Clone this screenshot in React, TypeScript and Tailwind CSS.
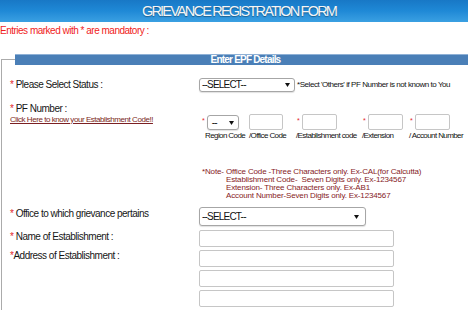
import React from "react";

const Star = ({ className = "" }: { className?: string }) => (
  <span className={`text-[#e3262b] ${className}`}>*</span>
);

const Arrow = () => (
  <svg width="5" height="4" viewBox="0 0 5 4" className="shrink-0">
    <polygon points="0,0 5,0 2.5,4" fill="#111" />
  </svg>
);

function FakeSelect({ className, text }: { className: string; text: string }) {
  return (
    <div
      className={`flex items-center justify-between rounded-[3px] border border-[#a6a6a6] bg-white pl-[2px] pr-[4px] shadow-[0_1px_1px_rgba(0,0,0,0.12)] ${className}`}
    >
      <span className="text-[10px] leading-none tracking-[-0.8px] text-[#111]">{text}</span>
      <Arrow />
    </div>
  );
}

const Box = ({ className }: { className: string }) => (
  <div className={`rounded-[2px] border border-[#c6c6c6] bg-white ${className}`} />
);

const pfCols = [
  { star: true, label: "Region Code", col: "w-[48px] pl-[3px]", input: "select", lab: "pl-[3px]" },
  { star: false, label: "/Office Code", col: "w-[47px] pl-[2px]", input: "w-[34px]", lab: "" },
  { star: true, label: "/Establishment code", col: "w-[67px] pl-[3px]", input: "w-[35px]", lab: "-ml-[1px]" },
  { star: true, label: "/Extension", col: "w-[47px] pl-[2px]", input: "w-[35px]", lab: "-ml-[1px]" },
  { star: true, label: "/ Account Number", col: "w-[60px] pl-[2px]", input: "w-[35px]", lab: "-ml-[1px]" },
];

const notes = [
  "Office Code -Three Characters only. Ex-CAL(for Calcutta)",
  "Establishment Code-  Seven Digits only. Ex-1234567",
  "Extension- Three Characters only. Ex-AB1",
  "Account Number-Seven Digits only. Ex-1234567",
];

export default function App() {
  return (
    <div className="h-[310px] w-[468px] overflow-hidden bg-white font-['Liberation_Sans',Arial,sans-serif] text-[#161616]">
      {/* title band */}
      <div className="flex h-[22px] items-center justify-center bg-gradient-to-b from-[#1878c6] via-[#1f89d6] to-[#3aa0e2] pl-[10px]">
        <h1 className="text-[14.5px] leading-none tracking-[-1.8px] text-[#f5f5f5] [text-shadow:0_1px_1px_rgba(0,0,0,0.35)]">
          GRIEVANCE REGISTRATION FORM
        </h1>
      </div>

      <p className="mt-[3px] text-[10px] leading-[12px] tracking-[-0.5px] text-[#f01c1c]">
        Entries marked with * are mandatory :
      </p>

      {/* fieldset */}
      <div className="ml-[1px] mt-[22px] h-[300px] border-l border-t border-[#ababab]">
        <div className="-mt-[6px] ml-[13px] flex h-[11px] items-center justify-center border-t border-[#8fb1d6] bg-[#4a7fb7] pl-[8px]">
          <span className="text-[10px] font-bold leading-none tracking-[-0.8px] text-white">Enter EPF Details</span>
        </div>

        <div className="pl-[8px]">
          {/* status */}
          <div className="mt-[13px] flex h-[14px] items-start">
            <div className="w-[189px] text-[10px] leading-[13px] tracking-[-0.5px]">
              <Star /> Please Select Status :
            </div>
            <FakeSelect className="h-[14px] w-[96px]" text="--SELECT--" />
            <span className="ml-[2px] self-center text-[8px] leading-none tracking-[-0.45px] text-[#111]">
              *Select 'Others' if PF Number is not known to You
            </span>
          </div>

          {/* pf number */}
          <div className="mt-[11px] flex items-start">
            <div className="w-[189px]">
              <div className="text-[10px] leading-[12px] tracking-[-0.5px]">
                <Star /> PF Number :
              </div>
              <a href="#" className="block text-[8px] leading-[10px] tracking-[-0.45px] text-[#7b1f22] underline">
                Click Here to know your Establishment Code!!
              </a>
            </div>
            <div className="pt-[12px]">
              <div className="flex">
                {pfCols.map((c) => (
                  <div key={c.label} className={`flex flex-col ${c.col}`}>
                    <div className="flex h-[15px] items-start">
                      {c.star && <Star className="mr-[1px] mt-[2px] text-[7px] leading-none" />}
                      {c.input === "select" ? (
                        <FakeSelect className="ml-[1px] h-[15px] w-[32px] pl-[4px]" text="--" />
                      ) : (
                        <Box className={`h-[16px] -mt-[1px] ${c.input} ${c.star ? "ml-[1px]" : ""}`} />
                      )}
                    </div>
                    <span
                      className={`mt-[1px] whitespace-nowrap text-[8px] leading-[9px] tracking-[-0.6px] text-[#111] ${c.lab}`}
                    >
                      {c.label}
                    </span>
                  </div>
                ))}
              </div>

              <div className="mt-[28px] flex pl-[3px] text-[8px] leading-[8px] tracking-[-0.15px] text-[#861b1e]">
                <span className="w-[24px] shrink-0">*Note-</span>
                <div>
                  {notes.map((n) => (
                    <div key={n} className="whitespace-pre">
                      {n}
                    </div>
                  ))}
                </div>
              </div>
            </div>
          </div>

          {/* office */}
          <div className="mt-[7px] flex items-start">
            <div className="mt-[1px] w-[189px] text-[10px] leading-[12px] tracking-[-0.5px]">
              <Star /> Office to which grievance pertains
            </div>
            <FakeSelect className="h-[19px] w-[167px] pr-[6px]" text="--SELECT--" />
          </div>

          {/* name */}
          <div className="mt-[4px] flex items-start">
            <div className="mt-[1px] w-[189px] text-[10px] leading-[12px] tracking-[-0.5px]">
              <Star /> Name of Establishment :
            </div>
            <Box className="h-[17px] w-[195px]" />
          </div>

          {/* address */}
          <div className="mt-[3px] flex items-start">
            <div className="w-[189px] text-[10px] leading-[12px] tracking-[-0.5px]">
              <Star />Address of Establishment :
            </div>
            <div className="flex flex-col gap-[3px]">
              <Box className="h-[17px] w-[195px]" />
              <Box className="h-[17px] w-[195px]" />
              <Box className="h-[17px] w-[195px]" />
            </div>
          </div>
        </div>
      </div>
    </div>
  );
}
